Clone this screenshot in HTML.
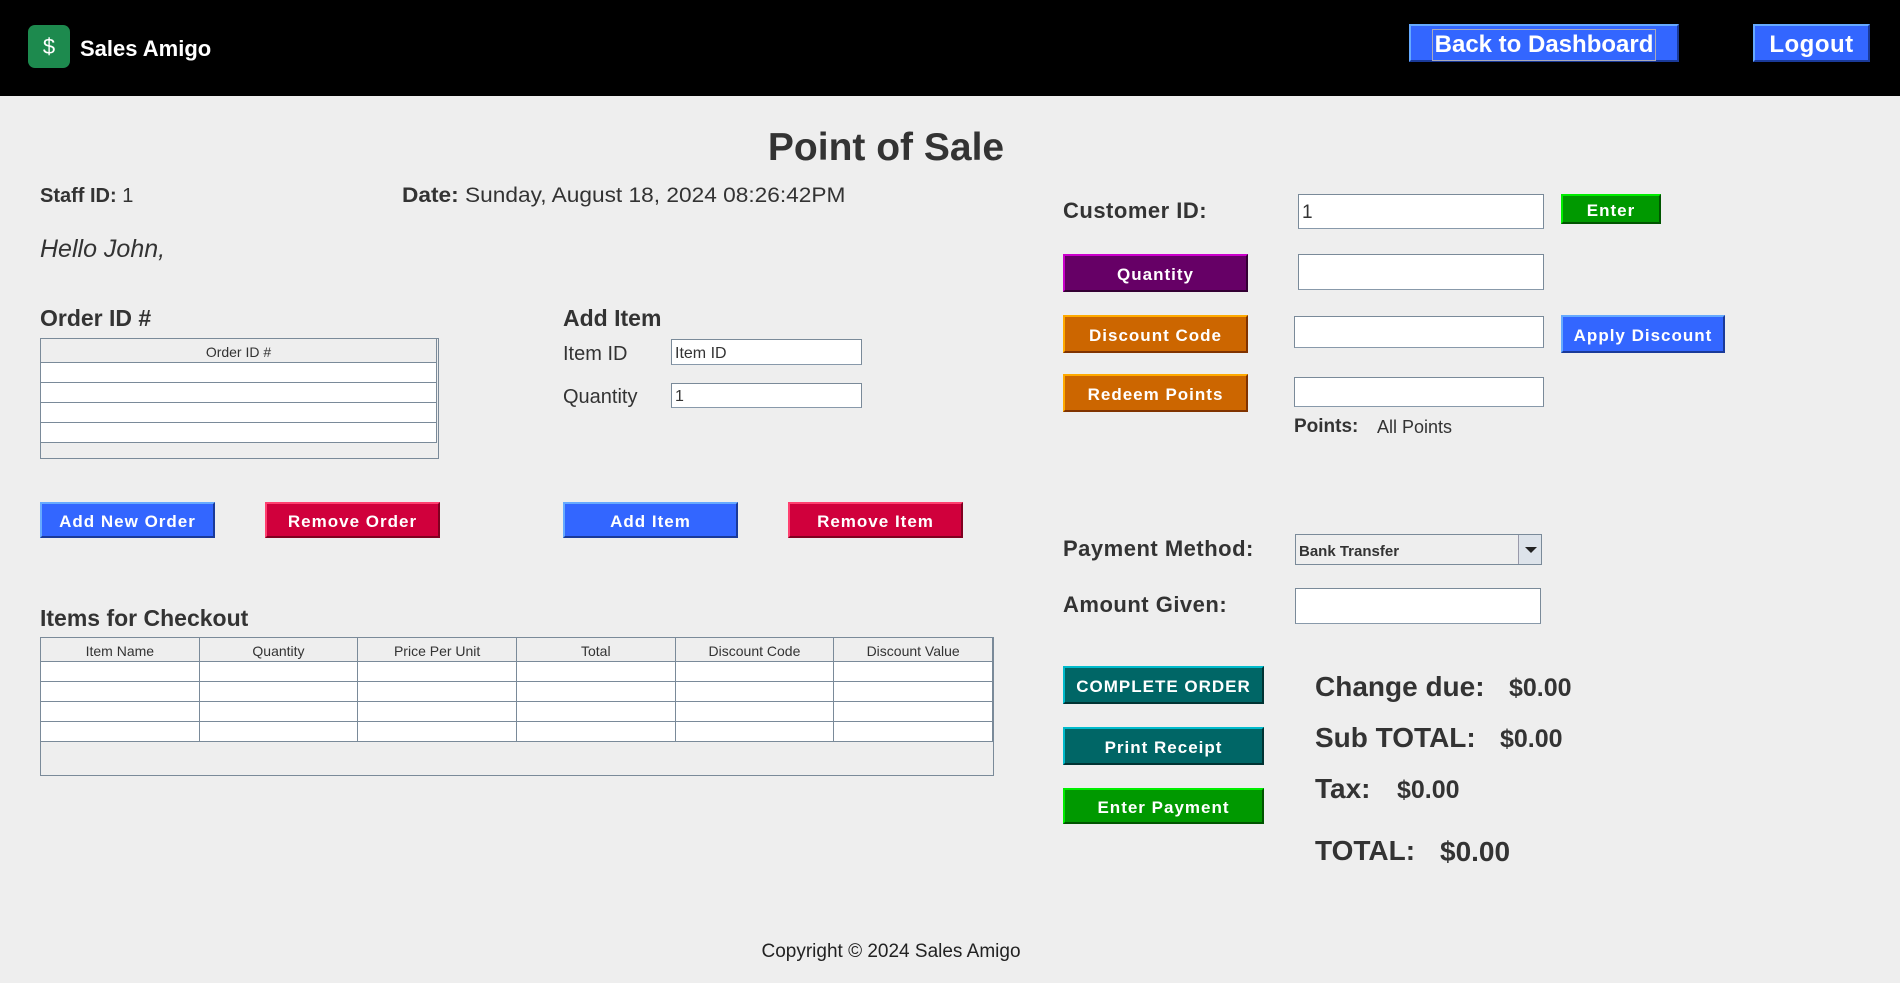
<!DOCTYPE html>
<html><head><meta charset="utf-8"><style>
*{margin:0;padding:0;box-sizing:border-box}
body{width:1900px;height:983px;background:#eeeeee;font-family:"Liberation Sans",sans-serif;color:#333;position:relative;overflow:hidden}
.a{position:absolute;white-space:nowrap}
.hdr{left:0;top:0;width:1900px;height:96px;background:#000}
.btn{position:absolute;color:#fff;font-weight:bold;display:flex;align-items:center;justify-content:center;font-size:17px;letter-spacing:1px;border:2px solid;border-color:#8cf #124 #124 #8cf;padding-top:3px}
.blue{background:#3366ff;border-color:#66aaff #1a3a99 #1a3a99 #66aaff}
.red{background:#d0003c;border-color:#ff4070 #800020 #800020 #ff4070}
.pur{background:#660066;border-color:#cc00cc #330033 #330033 #cc00cc}
.org{background:#cc6600;border-color:#ffaa00 #803300 #803300 #ffaa00}
.teal{background:#006666;border-color:#00bbcc #003333 #003333 #00bbcc}
.grn{background:#009900;border-color:#00ee00 #005500 #005500 #00ee00}
.inp{position:absolute;background:#fff;border:1px solid #7a8a99;border-bottom-color:#8899aa;font-size:17px;padding-left:3px;padding-top:3px;display:flex;align-items:center}
table{position:absolute;border-collapse:collapse;background:#fff}
td{border:1px solid #7a8a99;height:20px}
th{border:1px solid #7a8a99;background:#eeeeee;font-weight:normal;font-size:14px;height:24px;color:#333;padding-top:3px}
.lbl{font-size:20px}
.b{font-weight:bold}
</style></head><body>
<div class="a hdr"></div>
<div class="a" style="left:28px;top:25px;width:42px;height:43px;background:#1d8a4e;border-radius:7px;color:#fff;font-size:22px;display:flex;align-items:center;justify-content:center">$</div>
<div class="a b" style="left:80px;top:36px;color:#fff;font-size:22px">Sales Amigo</div>
<div class="btn blue" style="left:1409px;top:24px;width:270px;height:38px;font-size:24px;letter-spacing:0"><span style="border:1px solid #aab;padding:0 2px;line-height:30px">Back to Dashboard</span></div>
<div class="btn blue" style="left:1753px;top:24px;width:117px;height:38px;font-size:24px;letter-spacing:0.5px">Logout</div>

<div class="a b" style="left:886px;top:126px;transform:translateX(-50%);font-size:39px">Point of Sale</div>
<div class="a lbl" style="left:40px;top:185px"><b>Staff ID:</b> 1</div>
<div class="a" style="left:402px;top:184px;font-size:21px;transform:scaleX(1.08);transform-origin:left"><b>Date:</b> Sunday, August 18, 2024 08:26:42PM</div>
<div class="a" style="left:40px;top:235px;font-size:25px;font-style:italic">Hello John,</div>
<div class="a b" style="left:40px;top:305px;font-size:23px">Order ID #</div>
<div class="a" style="left:40px;top:338px;width:399px;height:121px;border:1px solid #7a8a99;background:#eeeeee"></div>
<table style="left:40px;top:338px;width:397px">
<tr><th>Order ID #</th></tr><tr><td></td></tr><tr><td></td></tr><tr><td></td></tr><tr><td></td></tr></table>

<div class="a b" style="left:563px;top:305px;font-size:23px">Add Item</div>
<div class="a lbl" style="left:563px;top:343px">Item ID</div>
<div class="inp" style="left:671px;top:339px;width:191px;height:26px;font-size:16px">Item ID</div>
<div class="a lbl" style="left:563px;top:386px">Quantity</div>
<div class="inp" style="left:671px;top:383px;width:191px;height:25px;font-size:16px">1</div>

<div class="btn blue" style="left:40px;top:502px;width:175px;height:36px">Add New Order</div>
<div class="btn red" style="left:265px;top:502px;width:175px;height:36px">Remove Order</div>
<div class="btn blue" style="left:563px;top:502px;width:175px;height:36px">Add Item</div>
<div class="btn red" style="left:788px;top:502px;width:175px;height:36px">Remove Item</div>

<div class="a b" style="left:40px;top:605px;font-size:23px">Items for Checkout</div>
<div class="a" style="left:40px;top:637px;width:954px;height:139px;border:1px solid #7a8a99;background:#eeeeee"></div>
<table style="left:40px;top:637px;width:953px;table-layout:fixed">
<tr><th>Item Name</th><th>Quantity</th><th>Price Per Unit</th><th>Total</th><th>Discount Code</th><th>Discount Value</th></tr>
<tr><td></td><td></td><td></td><td></td><td></td><td></td></tr>
<tr><td></td><td></td><td></td><td></td><td></td><td></td></tr>
<tr><td></td><td></td><td></td><td></td><td></td><td></td></tr>
<tr><td></td><td></td><td></td><td></td><td></td><td></td></tr>
</table>

<div class="a b" style="left:1063px;top:198px;font-size:22px;letter-spacing:0.5px">Customer ID:</div>
<div class="inp" style="left:1298px;top:194px;width:246px;height:35px;font-size:19px">1</div>
<div class="btn grn" style="left:1561px;top:194px;width:100px;height:30px">Enter</div>
<div class="btn pur" style="left:1063px;top:254px;width:185px;height:38px">Quantity</div>
<div class="inp" style="left:1298px;top:254px;width:246px;height:36px"></div>
<div class="btn org" style="left:1063px;top:315px;width:185px;height:38px">Discount Code</div>
<div class="inp" style="left:1294px;top:316px;width:250px;height:32px"></div>
<div class="btn blue" style="left:1561px;top:315px;width:164px;height:38px">Apply Discount</div>
<div class="btn org" style="left:1063px;top:374px;width:185px;height:38px">Redeem Points</div>
<div class="inp" style="left:1294px;top:377px;width:250px;height:30px"></div>
<div class="a" style="left:1294px;top:416px;font-size:19px"><b>Points:</b></div>
<div class="a" style="left:1377px;top:417px;font-size:18px">All Points</div>

<div class="a b" style="left:1063px;top:536px;font-size:22px;letter-spacing:0.5px">Payment Method:</div>
<div class="a" style="left:1295px;top:534px;width:247px;height:31px;border:1px solid #7a8a99;background:#eeeeee;font-size:15px;font-weight:bold;padding:8px 0 0 3px">Bank Transfer
<div style="position:absolute;right:0;top:0;width:23px;height:29px;border-left:1px solid #99a;background:#dde3ea"><div style="position:absolute;left:6px;top:12px;border-left:6px solid transparent;border-right:6px solid transparent;border-top:6px solid #222"></div></div></div>
<div class="a b" style="left:1063px;top:592px;font-size:22px;letter-spacing:0.5px">Amount Given:</div>
<div class="inp" style="left:1295px;top:588px;width:246px;height:36px"></div>

<div class="btn teal" style="left:1063px;top:666px;width:201px;height:38px">COMPLETE ORDER</div>
<div class="btn teal" style="left:1063px;top:727px;width:201px;height:38px">Print Receipt</div>
<div class="btn grn" style="left:1063px;top:788px;width:201px;height:36px">Enter Payment</div>

<div class="a b" style="left:1315px;top:671px;font-size:28px">Change due:</div>
<div class="a b" style="left:1509px;top:674px;font-size:25px">$0.00</div>
<div class="a b" style="left:1315px;top:722px;font-size:28px">Sub TOTAL:</div>
<div class="a b" style="left:1500px;top:725px;font-size:25px">$0.00</div>
<div class="a b" style="left:1315px;top:773px;font-size:28px">Tax:</div>
<div class="a b" style="left:1397px;top:776px;font-size:25px">$0.00</div>
<div class="a b" style="left:1315px;top:835px;font-size:28px">TOTAL:</div>
<div class="a b" style="left:1440px;top:836px;font-size:28px">$0.00</div>

<div class="a" style="left:891px;top:941px;transform:translateX(-50%);font-size:19px;color:#222">Copyright © 2024 Sales Amigo</div>
</body></html>
